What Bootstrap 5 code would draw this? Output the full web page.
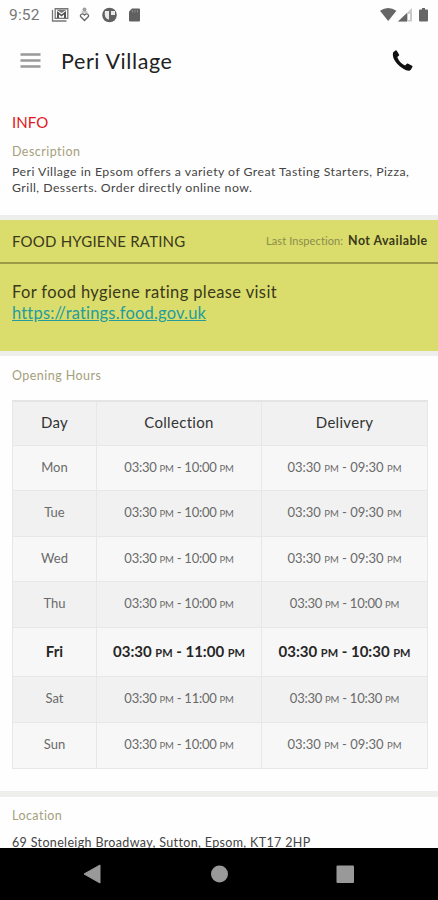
<!DOCTYPE html>
<html lang="en">
<head>
<meta charset="utf-8">
<meta name="viewport" content="width=device-width, initial-scale=1">
<title>Peri Village</title>
<link href="https://cdn.jsdelivr.net/npm/bootstrap@5.3.0/dist/css/bootstrap.min.css" rel="stylesheet">
<style>
body{font-family:Lato,"Open Sans",sans-serif;color:#444;background:#fefefe;font-size:12.5px;font-variant-ligatures:none}
.screen{height:900px}
.screen>*{flex-shrink:0}
.status-bar{height:30px;padding:0 8px 0 9px;color:#666}
.clock{font:15.5px/28px Roboto,sans-serif;letter-spacing:.2px;width:42px;color:#777}
.app-bar{height:62px;padding:0 25px 0 20px}
.app-title{font-size:21.5px;line-height:24px;color:#222;letter-spacing:.6px;margin-left:20px;margin-top:-1px}
.info{height:123px;padding:21px 12px 0}
.info-title{font-size:15px;line-height:18px;color:#e0181c;letter-spacing:.1px}
.label-tan{font-size:12.5px;line-height:16px;color:#a59e7c;letter-spacing:.45px}
.info .label-tan{margin-top:13px}
.copy{font-size:12.3px;line-height:16px;letter-spacing:.45px;white-space:nowrap}
.divider{height:5px;background:#eeeeec}
.divider-lg{height:6px}
.lime{background:#dadd6b;color:#3b391c}
.rating-head{height:44px;padding:0 11px 0 12px;border-bottom:2px solid #9b9b4a}
.rating-title{font-size:15px;letter-spacing:.2px}
.inspect{font-size:11px;color:#8b8c4d;letter-spacing:.1px}
.avail{font-size:12.4px;color:#3b391c;margin-left:5px;letter-spacing:.45px;margin-right:-.5px}
.rating-body{height:87px;padding:18px 12px 0;font-size:16.5px;line-height:21px;letter-spacing:.38px}
.rating-body a{color:#249c9e;letter-spacing:.18px}
.hours{padding:12px 11px 0 12px;height:435px}
.hours-table{margin-top:16px;table-layout:fixed;width:415px;border-collapse:collapse;text-align:center;border:1px solid #e4e4e4;border-top:2px solid #e4e4e4}
.hours-table th,.hours-table td{border:1px solid #e7e7e7;padding:0;vertical-align:middle}
.hours-table th{height:44px;font-size:15px;font-weight:400;color:#333;background:#f1f1f1;letter-spacing:.3px;padding-bottom:2px}
.hours-table td{height:46px;font-size:13px;color:#6a6a6a;background:#f7f7f7}
.hours-table .short td{height:45px}
.hours-table td.slim{letter-spacing:-.25px}
.hours-table tr:nth-child(even) td{background:#f1f1f1}
.hours-table small{font-size:9.5px}
.hours-table .today td{height:49px;font-size:15px;font-weight:700;color:#262626}
.hours-table .today small{font-size:11px}
.place{height:51px;padding:11px 12px 0}
.place .copy{margin-top:11px;font-size:12.5px;letter-spacing:.35px}
.nav-keys{height:52px;background:#000}
</style>
<script src="https://cdn.jsdelivr.net/npm/bootstrap@5.3.0/dist/js/bootstrap.bundle.min.js"></script>
</head>
<body>
<div class="screen d-flex flex-column overflow-hidden">
  <header>
    <div class="status-bar d-flex align-items-center">
      <span class="clock">9:52</span>
      <svg width="92" height="16" viewBox="0 0 92 16">
        <g fill="none" stroke="#777" stroke-width="1.3"><path d="M1.500 3v11h14M4.200 1.700h12.600v9.600H4.200z"/></g>
        <path d="M6 11V4l4.500 3.400L15 4v7h-2V7.500l-2.500 2L8 7.500V11z" fill="#555"/><path d="M5 2.500h11l-5.500 3.500z" fill="#777"/>
        <path d="M33.500 13.500 29.800 9.800c-1.500-2 1.500-4.300 3.700-1.800 2.200-2.500 5.200-.2 3.700 1.800z" fill="none" stroke="#666" stroke-width="1.300"/><circle cx="33.500" cy="2.500" r="1.500" fill="#aaa" stroke="#888"/><path d="M30.500 5h6" stroke="#999"/>
        <circle cx="58.500" cy="8" r="7.300" fill="#606060"/><path d="M54 4h4v8.500c-3-.5-5-3-4-8.500zM60 4h4v4h-4z" fill="#e8e8e8"/>
        <path d="M81 1.500h7q1 0 1 1v11q0 1-1 1h-9q-1 0-1-1v-9z" fill="#606060"/><path d="M81.500 3v2.500M84 3v2.500M86.500 3v2.500" stroke="#999" stroke-width=".8"/>
      </svg>
      <svg class="ms-auto" width="50" height="16" viewBox="0 0 50 16">
        <path d="M0 3.800Q8.200-1.800 16.400 3.800L8.200 14z" fill="#666"/><path d="M32 1v13.500H18z" fill="#c9c9c9"/><path d="M27 6v8.500h-9z" fill="#666"/><path d="M28 7h2v6h-2z" fill="#fff"/>
        <path d="M42 1h3v1.500h2q1 0 1 1v10q0 1-1 1h-7q-1 0-1-1v-10q0-1 1-1h2z" fill="#666"/>
      </svg>
    </div>
    <div class="app-bar d-flex align-items-center">
      <svg width="21" height="18" viewBox="0 0 21 18"><path d="M.5 2.500h20M.5 8.500h20M.5 14.500h20" stroke="#999" stroke-width="2.500"/></svg>
      <span class="app-title">Peri Village</span>
      <svg class="ms-auto" width="21" height="22" viewBox="0 0 21 22"><path d="M1.200 2.200 3.500.5q.8-.4 1.300.3L7 4.400q.4.800-.2 1.300L5.300 7.100c1 3.500 4.200 7.100 7.800 8.300l1.700-1.600q.6-.6 1.400-.1l3.800 2q.8.500.4 1.300l-1.600 2.800C17.800 21.300 14 21 9.800 17.800 4.500 14-.6 7.500 1.200 2.200z" fill="#111"/></svg>
    </div>
  </header>
  <section class="info">
    <div class="info-title">INFO</div>
    <div class="label-tan">Description</div>
    <div class="copy mt-1">Peri Village in Epsom offers a variety of Great Tasting Starters, Pizza,<br>Grill, Desserts. Order directly online now.</div>
  </section>
  <div class="divider"></div>
  <section class="lime">
    <div class="rating-head d-flex align-items-center justify-content-between">
      <span class="rating-title">FOOD HYGIENE RATING</span>
      <span class="d-flex align-items-center"><span class="inspect">Last Inspection:</span><span class="avail fw-bold">Not Available</span></span>
    </div>
    <div class="rating-body">For food hygiene rating please visit<br><a href="https://ratings.food.gov.uk">https://ratings.food.gov.uk</a></div>
  </section>
  <div class="divider"></div>
  <section class="hours">
    <div class="label-tan">Opening Hours</div>
    <table class="hours-table">
      <colgroup><col style="width:84px"><col style="width:165px"><col style="width:166px"></colgroup>
      <thead><tr><th>Day</th><th>Collection</th><th>Delivery</th></tr></thead>
      <tbody>
        <tr class="short"><td>Mon</td><td class="slim">03:30 <small>PM</small> - 10:00 <small>PM</small></td><td>03:30 <small>PM</small> - 09:30 <small>PM</small></td></tr>
        <tr><td>Tue</td><td class="slim">03:30 <small>PM</small> - 10:00 <small>PM</small></td><td>03:30 <small>PM</small> - 09:30 <small>PM</small></td></tr>
        <tr class="short"><td>Wed</td><td class="slim">03:30 <small>PM</small> - 10:00 <small>PM</small></td><td>03:30 <small>PM</small> - 09:30 <small>PM</small></td></tr>
        <tr><td>Thu</td><td class="slim">03:30 <small>PM</small> - 10:00 <small>PM</small></td><td class="slim">03:30 <small>PM</small> - 10:00 <small>PM</small></td></tr>
        <tr class="today"><td>Fri</td><td>03:30 <small>PM</small> - 11:00 <small>PM</small></td><td>03:30 <small>PM</small> - 10:30 <small>PM</small></td></tr>
        <tr><td>Sat</td><td class="slim">03:30 <small>PM</small> - 11:00 <small>PM</small></td><td class="slim">03:30 <small>PM</small> - 10:30 <small>PM</small></td></tr>
        <tr><td>Sun</td><td class="slim">03:30 <small>PM</small> - 10:00 <small>PM</small></td><td>03:30 <small>PM</small> - 09:30 <small>PM</small></td></tr>
      </tbody>
    </table>
  </section>
  <div class="divider divider-lg"></div>
  <section class="place overflow-hidden">
    <div class="label-tan">Location</div>
    <div class="copy">69 Stoneleigh Broadway, Sutton, Epsom, KT17 2HP</div>
  </section>
  <nav class="nav-keys d-flex align-items-center">
    <svg width="438" height="52" viewBox="0 0 438 52"><path d="M84 26 100 17v18z" fill="#999" stroke="#999" stroke-linejoin="round"/><circle cx="219.500" cy="26" r="8.500" fill="#999"/><rect x="336.500" y="17.500" width="17.500" height="17.500" rx="1" fill="#999"/></svg>
  </nav>
</div>
</body>
</html>
